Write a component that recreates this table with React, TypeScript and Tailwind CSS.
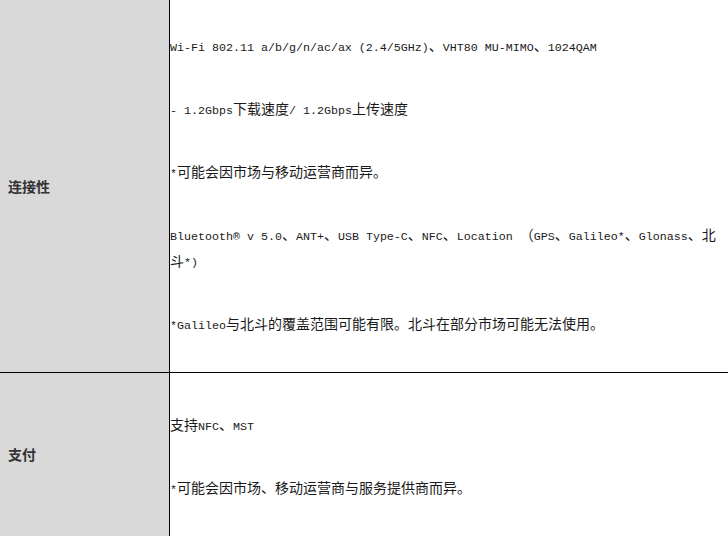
const rows = [
  {
    label: "连接性",
    first: true,
    lines: [
      "Wi-Fi 802.11 a/b/g/n/ac/ax (2.4/5GHz)、VHT80 MU-MIMO、1024QAM",
      "- 1.2Gbps下载速度/ 1.2Gbps上传速度",
      "*可能会因市场与移动运营商而异。",
      "Bluetooth® v 5.0、ANT+、USB Type-C、NFC、Location （GPS、Galileo*、Glonass、北斗*)",
      "*Galileo与北斗的覆盖范围可能有限。北斗在部分市场可能无法使用。",
    ],
  },
  {
    label: "支付",
    first: false,
    lines: ["支持NFC、MST", "*可能会因市场、移动运营商与服务提供商而异。"],
  },
];

// latin runs are set smaller in a mono face so each char is 7px wide, like SimSun
function Mixed({ text }: { text: string }) {
  const parts = text.split(/([\x00-\xff]+)/).filter((p) => p !== "");
  return (
    <>
      {parts.map((p, i) =>
        /^[\x00-\xff]+$/.test(p) ? (
          <span
            key={i}
            className="font-['Liberation_Mono',monospace] text-[11.667px] leading-[12px] whitespace-pre-wrap"
          >
            {p}
          </span>
        ) : (
          <span key={i} className="leading-[14px]">
            {p}
          </span>
        ),
      )}
    </>
  );
}

export default function App() {
  return (
    <div className="h-[536px] w-[728px] overflow-hidden bg-white font-['Noto_Sans_CJK_SC',sans-serif] text-[14px] text-[#1a1a1a]">
      {rows.map((row) => (
        <div key={row.label} className="flex border-b border-black">
          <div className="flex w-[170px] shrink-0 items-center border-r border-black bg-[#d9d9d9] pl-[8px]">
            <span className="font-bold text-[#333]">{row.label}</span>
          </div>
          <div
            className={[
              "flex w-[558px] flex-col gap-[37px] pb-[36px]",
              row.first ? "pt-[32px]" : "pt-[38px]",
            ].join(" ")}
          >
            {row.lines.map((line) => (
              <p key={line} className="leading-[26px]">
                <Mixed text={line} />
              </p>
            ))}
          </div>
        </div>
      ))}
    </div>
  );
}
